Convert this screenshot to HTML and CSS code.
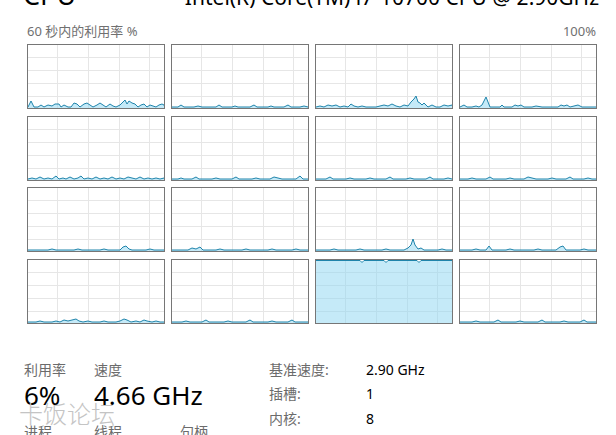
FILE: index.html
```html
<!DOCTYPE html>
<html lang="zh-CN">
<head>
<meta charset="utf-8">
<title>CPU</title>
<link rel="stylesheet" href="styles.css">
</head>
<body>
<div class="page">
  <svg class="defs" width="0" height="0" aria-hidden="true">
    <defs>
      <path id="gl" d="M0 12.5H136M0 25.5H136M0 38.5H136M0 51.5H136M29.5 0V63M60.5 0V63M91.5 0V63M121.5 0V63"/>
    </defs>
  </svg>

  <header class="title">
    <span class="cpu">CPU</span>
    <span class="model">Intel(R) Core(TM) i7-10700 CPU @ 2.90GHz</span>
  </header>

  <div class="graph-head">
    <span>60 秒内的利用率 %</span>
    <span>100%</span>
  </div>

  <div class="grid">
    <div class="cell"><svg viewBox="0 0 136 63"><use href="#gl" class="gridlines"/><polygon class="area" points="-2,64 0,62 3,56 6,62 10,62 13,60 16,62 20,60 24,61 27,59 31,59 33,62 36,60 40,62 43,62 46,58 49,59 52,62 56,59 59,58 62,60 65,62 69,60 72,58 75,60 78,62 82,59 85,61 88,62 92,60 95,57 97,55 99,59 101,56 104,58 107,59 110,62 113,60 116,59 119,62 122,60 125,61 128,62 131,60 134,59 136,60 138,64"/></svg></div>
    <div class="cell"><svg viewBox="0 0 136 63"><use href="#gl" class="gridlines"/><polygon class="area" points="-2,64 0,62 6,62 9,60 12,62 22,62 26,61 30,62 44,62 47,60 50,62 60,62 63,61 66,62 78,62 82,60 85,62 96,62 99,61 102,62 112,62 116,60 119,62 128,62 132,61 136,62 138,64"/></svg></div>
    <div class="cell"><svg viewBox="0 0 136 63"><use href="#gl" class="gridlines"/><polygon class="area" points="-2,64 0,62 4,61 8,62 12,60 16,61 20,60 24,62 28,61 32,62 35,59 38,61 42,62 46,61 50,62 56,62 60,62 64,61 68,60 72,61 76,59 80,61 84,62 88,60 92,61 95,57 98,54 100,51 102,57 104,58 106,60 108,58 110,60 112,62 116,60 120,62 124,62 128,60 132,61 136,60 138,64"/></svg></div>
    <div class="cell"><svg viewBox="0 0 136 63"><use href="#gl" class="gridlines"/><polygon class="area" points="-2,64 0,62 4,60 7,62 12,62 16,61 19,62 22,60 24,56 26,52 28,57 30,62 40,62 42,60 44,62 52,62 55,60 58,61 61,60 64,62 72,62 76,61 82,62 98,62 101,60 104,61 107,60 110,62 114,61 118,60 122,62 136,62 138,64"/></svg></div>

    <div class="cell"><svg viewBox="0 0 136 63"><use href="#gl" class="gridlines"/><polygon class="area" points="-2,64 0,62 4,61 8,62 12,60 16,62 20,61 24,62 28,59 31,62 35,61 38,62 42,60 46,62 50,61 53,59 56,62 60,61 64,62 68,60 72,62 76,61 80,62 84,60 88,62 92,61 96,62 100,60 104,61 108,62 112,60 116,62 120,61 124,62 128,61 132,62 136,61 138,64"/></svg></div>
    <div class="cell"><svg viewBox="0 0 136 63"><use href="#gl" class="gridlines"/><polygon class="area" points="-2,64 0,62 6,62 9,61 12,62 20,62 24,60 27,62 40,62 44,61 48,62 60,62 64,60 67,62 80,62 84,61 88,62 98,62 102,60 106,61 110,62 124,62 128,59 131,62 136,62 138,64"/></svg></div>
    <div class="cell"><svg viewBox="0 0 136 63"><use href="#gl" class="gridlines"/><polygon class="area" points="-2,64 0,62 10,62 14,60 17,62 30,62 34,61 38,62 50,62 54,61 58,62 70,62 74,60 77,62 90,62 94,61 98,62 110,62 114,60 117,62 128,62 132,61 136,62 138,64"/></svg></div>
    <div class="cell"><svg viewBox="0 0 136 63"><use href="#gl" class="gridlines"/><polygon class="area" points="-2,64 0,62 8,62 12,61 16,62 26,62 30,60 33,62 46,62 50,61 54,62 64,62 68,60 72,61 76,62 88,62 92,61 96,62 106,62 110,60 113,62 124,62 128,61 132,62 136,62 138,64"/></svg></div>

    <div class="cell"><svg viewBox="0 0 136 63"><use href="#gl" class="gridlines"/><polygon class="area" points="-2,64 0,62 20,62 24,61 28,62 46,62 50,61 54,62 72,62 76,61 80,62 92,62 95,59 98,58 101,61 104,62 118,62 122,61 126,62 136,62 138,64"/></svg></div>
    <div class="cell"><svg viewBox="0 0 136 63"><use href="#gl" class="gridlines"/><polygon class="area" points="-2,64 0,62 16,62 20,60 24,61 28,59 31,62 44,62 48,61 52,62 70,62 74,61 78,62 96,62 100,61 104,62 120,62 124,61 128,62 136,62 138,64"/></svg></div>
    <div class="cell"><svg viewBox="0 0 136 63"><use href="#gl" class="gridlines"/><polygon class="area" points="-2,64 0,62 14,62 18,61 22,62 40,62 44,61 48,62 66,62 70,61 74,62 88,62 92,60 95,57 97,51 99,57 102,61 105,60 108,62 122,62 126,61 130,62 136,62 138,64"/></svg></div>
    <div class="cell"><svg viewBox="0 0 136 63"><use href="#gl" class="gridlines"/><polygon class="area" points="-2,64 0,62 12,62 16,61 20,62 26,62 29,58 32,62 46,62 50,61 54,62 74,62 78,61 82,62 96,62 100,59 103,58 106,62 120,62 124,61 128,62 136,62 138,64"/></svg></div>

    <div class="cell"><svg viewBox="0 0 136 63"><use href="#gl" class="gridlines"/><polygon class="area" points="-2,64 0,62 8,62 12,61 16,62 24,62 28,61 32,62 36,60 40,61 44,60 48,59 51,61 55,62 60,61 64,62 72,62 76,61 80,62 88,62 92,61 96,59 99,60 103,62 108,61 112,62 116,60 119,61 124,62 128,61 132,62 136,62 138,64"/></svg></div>
    <div class="cell"><svg viewBox="0 0 136 63"><use href="#gl" class="gridlines"/><polygon class="area" points="-2,64 0,62 10,62 14,61 18,62 30,62 34,60 37,62 52,62 56,61 60,62 74,62 78,60 81,62 96,62 100,61 104,62 116,62 120,60 123,62 136,62 138,64"/></svg></div>
    <div class="cell"><svg viewBox="0 0 136 63"><use href="#gl" class="gridlines"/><polygon class="area" points="-2,64 -2,0.5 44,0.5 46,2.5 48,0.5 68,0.5 70,2.5 72,0.5 101,0.5 103,2.5 105,0.5 138,0.5 138,64"/></svg></div>
    <div class="cell"><svg viewBox="0 0 136 63"><use href="#gl" class="gridlines"/><polygon class="area" points="-2,64 0,62 12,62 16,61 20,62 34,62 38,60 41,62 56,62 60,61 64,62 78,62 82,60 85,62 100,62 104,61 108,62 120,62 124,60 127,62 136,62 138,64"/></svg></div>
  </div>

  <section class="stats">
    <div class="live">
      <span class="lbl">利用率</span>
      <span class="lbl">速度</span>
      <span class="lbl"></span>
      <span class="big">6%</span>
      <span class="big">4.66 GHz</span>
      <span class="big"></span>
      <span class="lbl">进程</span>
      <span class="lbl">线程</span>
      <span class="lbl">句柄</span>
    </div>
    <dl class="info">
      <dt>基准速度:</dt><dd>2.90 GHz</dd>
      <dt>插槽:</dt><dd>1</dd>
      <dt>内核:</dt><dd>8</dd>
    </dl>
  </section>

  <div class="watermark">卡饭论坛</div>
</div>
</body>
</html>
```
FILE: styles.css
```css
html, body {
  margin: 0;
  padding: 0;
  background: #ffffff;
}

body {
  font-family: "Noto Sans", "Noto Sans CJK SC", sans-serif;
  color: #000;
  overflow: hidden;
}

.defs {
  position: absolute;
  width: 0;
  height: 0;
}

.page {
  position: relative;
  width: 616px;
  height: 435px;
  overflow: hidden;
}

.title {
  display: flex;
  justify-content: space-between;
  align-items: baseline;
  margin-top: -19px;
  padding: 0 17px 0 23px;
  height: 27px;
  line-height: 27px;
  white-space: nowrap;
}

.cpu {
  font-size: 27px;
}

.model {
  font-size: 21px;
}

.graph-head {
  display: flex;
  justify-content: space-between;
  margin: 15px 20px 5px 27px;
  font-size: 13px;
  line-height: 16px;
  color: #707070;
}

.grid {
  display: grid;
  grid-template-columns: repeat(4, 138px);
  grid-auto-rows: 65px;
  column-gap: 6px;
  row-gap: 6.67px;
  margin-left: 27px;
}

.cell {
  box-sizing: border-box;
  border: 1px solid #767676;
  background: #fff;
}

.cell svg {
  display: block;
  width: 136px;
  height: 63px;
  overflow: hidden;
}

.gridlines {
  fill: none;
  stroke: #e6e6e6;
  stroke-width: 1;
}

.area {
  fill: rgba(139, 213, 242, 0.5);
  stroke: #1f84ab;
  stroke-width: 1;
  stroke-linejoin: round;
}

.stats {
  display: flex;
  margin-top: 36px;
  padding-left: 24px;
}

.live {
  display: grid;
  grid-template-columns: 70px 86px 60px;
  grid-template-rows: 20px 42px 20px;
  width: 245px;
  white-space: nowrap;
}

.lbl {
  font-size: 14px;
  line-height: 20px;
  color: #6b6b6b;
}

.big {
  font-size: 26px;
  line-height: 30px;
  color: #000;
}

.info {
  display: grid;
  grid-template-columns: 97px auto;
  grid-auto-rows: 24.5px;
  margin: 0;
  font-size: 14px;
  line-height: 20px;
}

.info dt {
  color: #6b6b6b;
}

.info dd {
  margin: 0;
  color: #000;
}

.watermark {
  position: absolute;
  left: 19px;
  top: 399px;
  font-size: 24px;
  line-height: 28px;
  font-weight: 300;
  color: #c4c4c4;
  font-family: "Noto Sans CJK SC", sans-serif;
}
```
